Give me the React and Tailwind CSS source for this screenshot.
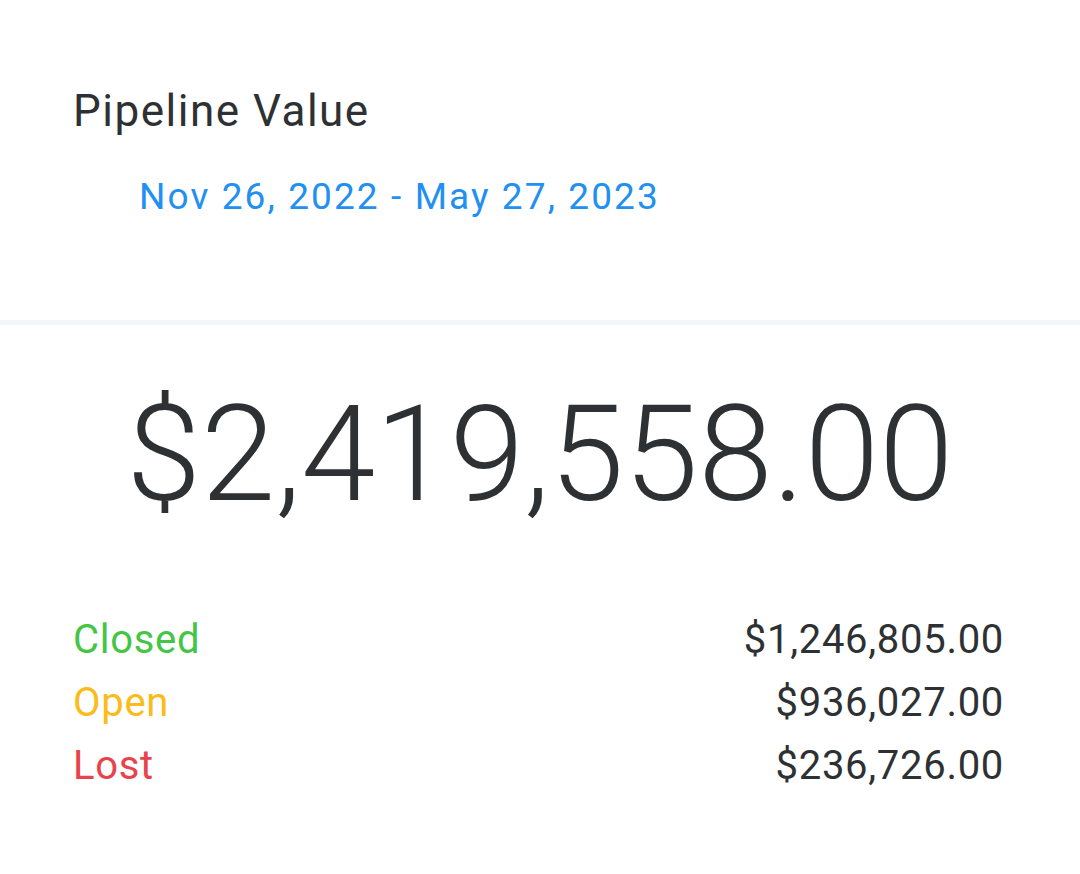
export default function App() {
    const rows = [
        { label: "Closed", value: "$1,246,805.00", color: "text-[#45c545]" },
        { label: "Open", value: "$936,027.00", color: "text-[#fbbb1a]" },
        { label: "Lost", value: "$236,726.00", color: "text-[#e8434b]" },
    ];

    return (
        <div className="w-[1080px] h-[874px] bg-white font-['Roboto',sans-serif] overflow-hidden">
            {/* Header */}
            <div className="pt-[85px] pl-[73px] h-[320px]">
                <h2 className="text-[44px] leading-[52px] tracking-[1.5px] text-[#2e3133]">Pipeline Value</h2>
                <p className="mt-[38px] pl-[66px] text-[37px] leading-[44px] tracking-[2.1px] text-[#2290f0]">
                    Nov 26, 2022 - May 27, 2023
                </p>
            </div>
            <div className="h-[5px] bg-[#f3f6f8]"></div>

            {/* Total */}
            <div className="pt-[50px] text-center">
                <p className="text-[134px] leading-[160px] font-light text-[#2e3133]">$2,419,558.00</p>
            </div>

            {/* Breakdown */}
            <div className="mt-[73px] pl-[73px] pr-[76px] flex flex-col">
                {rows.map((r) => (
                    <div key={r.label} className="flex justify-between items-center h-[63px] text-[40px] tracking-[0.7px]">
                        <span className={r.color}>{r.label}</span>
                        <span className="text-[#2e3133]">{r.value}</span>
                    </div>
                ))}
            </div>
        </div>
    );
}
